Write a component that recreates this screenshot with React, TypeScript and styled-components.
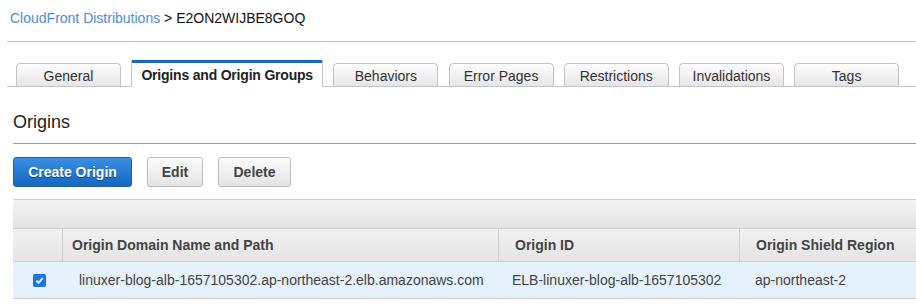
import styled, { createGlobalStyle } from 'styled-components';

const GlobalStyle = createGlobalStyle`
  html, body {
    margin: 0;
    padding: 0;
    background: #fff;
  }
  body {
    font-family: "Liberation Sans", Arial, sans-serif;
    font-size: 14px;
    color: #333;
  }
`;

const Page = styled.div`
  width: 916px;
  height: 307px;
  overflow: hidden;
  padding-left: 7px;
  box-sizing: border-box;
`;

const Breadcrumb = styled.div`
  padding: 9px 0 0 3px;
  height: 32px;
  line-height: 18px;
  font-size: 14px;
  color: #111;
  border-bottom: 1px solid #c4c4c4;
`;

const Crumb = styled.a`
  color: #4a8edc;
  text-decoration: none;
`;

const TabBar = styled.div`
  margin-top: 18px;
  display: flex;
  align-items: flex-end;
  gap: 10.2px;
  padding-left: 9px;
  height: 26px;
  border-bottom: 1px solid #c4c4c4;
`;

const Tab = styled.div<{ $active?: boolean }>`
  box-sizing: border-box;
  width: ${p => (p.$active ? '192px' : '105px')};
  height: ${p => (p.$active ? '27px' : '24px')};
  margin-bottom: -1px;
  display: flex;
  align-items: center;
  justify-content: center;
  font-size: 14px;
  font-weight: ${p => (p.$active ? 'bold' : 'normal')};
  letter-spacing: ${p => (p.$active ? '-0.2px' : '0')};
  color: ${p => (p.$active ? '#222' : '#333')};
  border: 1px solid #c4c4c4;
  border-top: ${p => (p.$active ? '3px solid #1468c4' : '1px solid #c4c4c4')};
  border-bottom: 1px solid ${p => (p.$active ? '#fff' : '#c4c4c4')};
  border-radius: ${p => (p.$active ? '2px 2px 0 0' : '4px 4px 0 0')};
  background: ${p => (p.$active ? '#fff' : 'linear-gradient(#fdfdfd, #e6e6e6)')};
  padding-top: ${p => (p.$active ? '0' : '1px')};
`;

const Section = styled.div`
  padding-left: 6px;
`;

const Heading = styled.h2`
  margin: 24px 0 0;
  padding-bottom: 10px;
  font-size: 18px;
  line-height: 22px;
  font-weight: normal;
  color: #222;
  border-bottom: 1px solid #a0a0a0;
`;

const Toolbar = styled.div`
  margin-top: 13px;
  display: flex;
  gap: 15px;
`;

const Button = styled.button<{ $primary?: boolean; $w: number }>`
  box-sizing: border-box;
  width: ${p => p.$w}px;
  height: 30px;
  font-family: "Liberation Sans", Arial, sans-serif;
  font-size: 14px;
  font-weight: bold;
  border-radius: 3px;
  padding: 0;
  cursor: pointer;
  color: ${p => (p.$primary ? '#fff' : '#444')};
  border: 1px solid ${p => (p.$primary ? '#1760b5' : '#bdbdbd')};
  background: ${p =>
    p.$primary ? 'linear-gradient(#3a8fe2, #1566c2)' : 'linear-gradient(#fbfbfb, #e4e4e4)'};
  text-shadow: ${p => (p.$primary ? '0 1px 1px rgba(0,0,0,0.45)' : 'none')};
`;

const Table = styled.div`
  margin-top: 12px;
  display: grid;
  grid-template-columns: 50px 436px 241px 1fr;
`;

const Band = styled.div`
  grid-column: 1 / -1;
  height: 28px;
  border-top: 1px solid #cfcfcf;
  background: linear-gradient(#f3f3f3, #e3e3e3);
`;

const HeadCell = styled.div<{ $pad: number; $last?: boolean }>`
  height: 32px;
  display: flex;
  align-items: center;
  padding-left: ${p => p.$pad}px;
  border-top: 1px solid #cfcfcf;
  border-right: ${p => (p.$last ? 'none' : '1px solid #d0d0d0')};
  background: linear-gradient(#f1f1f1, #e5e5e5);
  font-weight: bold;
  color: #444;
  white-space: nowrap;
`;

const Cell = styled.div<{ $pad: number }>`
  height: 36px;
  display: flex;
  align-items: center;
  padding-left: ${p => p.$pad}px;
  border-top: 1px solid #cfcfcf;
  border-bottom: 1px solid #cfcfcf;
  background: #e5f1fc;
  color: #444;
  white-space: nowrap;
`;

const Check = styled.span`
  width: 13px;
  height: 13px;
  border-radius: 2px;
  background: #1a73e8;
  display: flex;
  align-items: center;
  justify-content: center;
`;

const tabs = ['General', 'Origins and Origin Groups', 'Behaviors', 'Error Pages', 'Restrictions', 'Invalidations', 'Tags'];

export default function App() {
  return (
    <Page>
      <GlobalStyle />
      <Breadcrumb>
        <Crumb href="#">CloudFront Distributions</Crumb> &gt; E2ON2WIJBE8GOQ
      </Breadcrumb>
      <TabBar>
        {tabs.map(t => (
          <Tab key={t} $active={t === 'Origins and Origin Groups'}>{t}</Tab>
        ))}
      </TabBar>
      <Section>
        <Heading>Origins</Heading>
        <Toolbar>
          <Button $primary $w={119}>Create Origin</Button>
          <Button $w={56}>Edit</Button>
          <Button $w={73}>Delete</Button>
        </Toolbar>
        <Table>
          <Band />
          <HeadCell $pad={0} />
          <HeadCell $pad={9}>Origin Domain Name and Path</HeadCell>
          <HeadCell $pad={16}>Origin ID</HeadCell>
          <HeadCell $pad={16} $last>Origin Shield Region</HeadCell>
          <Cell $pad={20}>
            <Check>
              <svg width="9" height="9" viewBox="0 0 10 10">
                <path d="M1.5 5.2 L4 7.6 L8.6 2.2" fill="none" stroke="#fff" strokeWidth="2" />
              </svg>
            </Check>
          </Cell>
          <Cell $pad={16}>linuxer-blog-alb-1657105302.ap-northeast-2.elb.amazonaws.com</Cell>
          <Cell $pad={13}>ELB-linuxer-blog-alb-1657105302</Cell>
          <Cell $pad={15}>ap-northeast-2</Cell>
        </Table>
      </Section>
    </Page>
  );
}
